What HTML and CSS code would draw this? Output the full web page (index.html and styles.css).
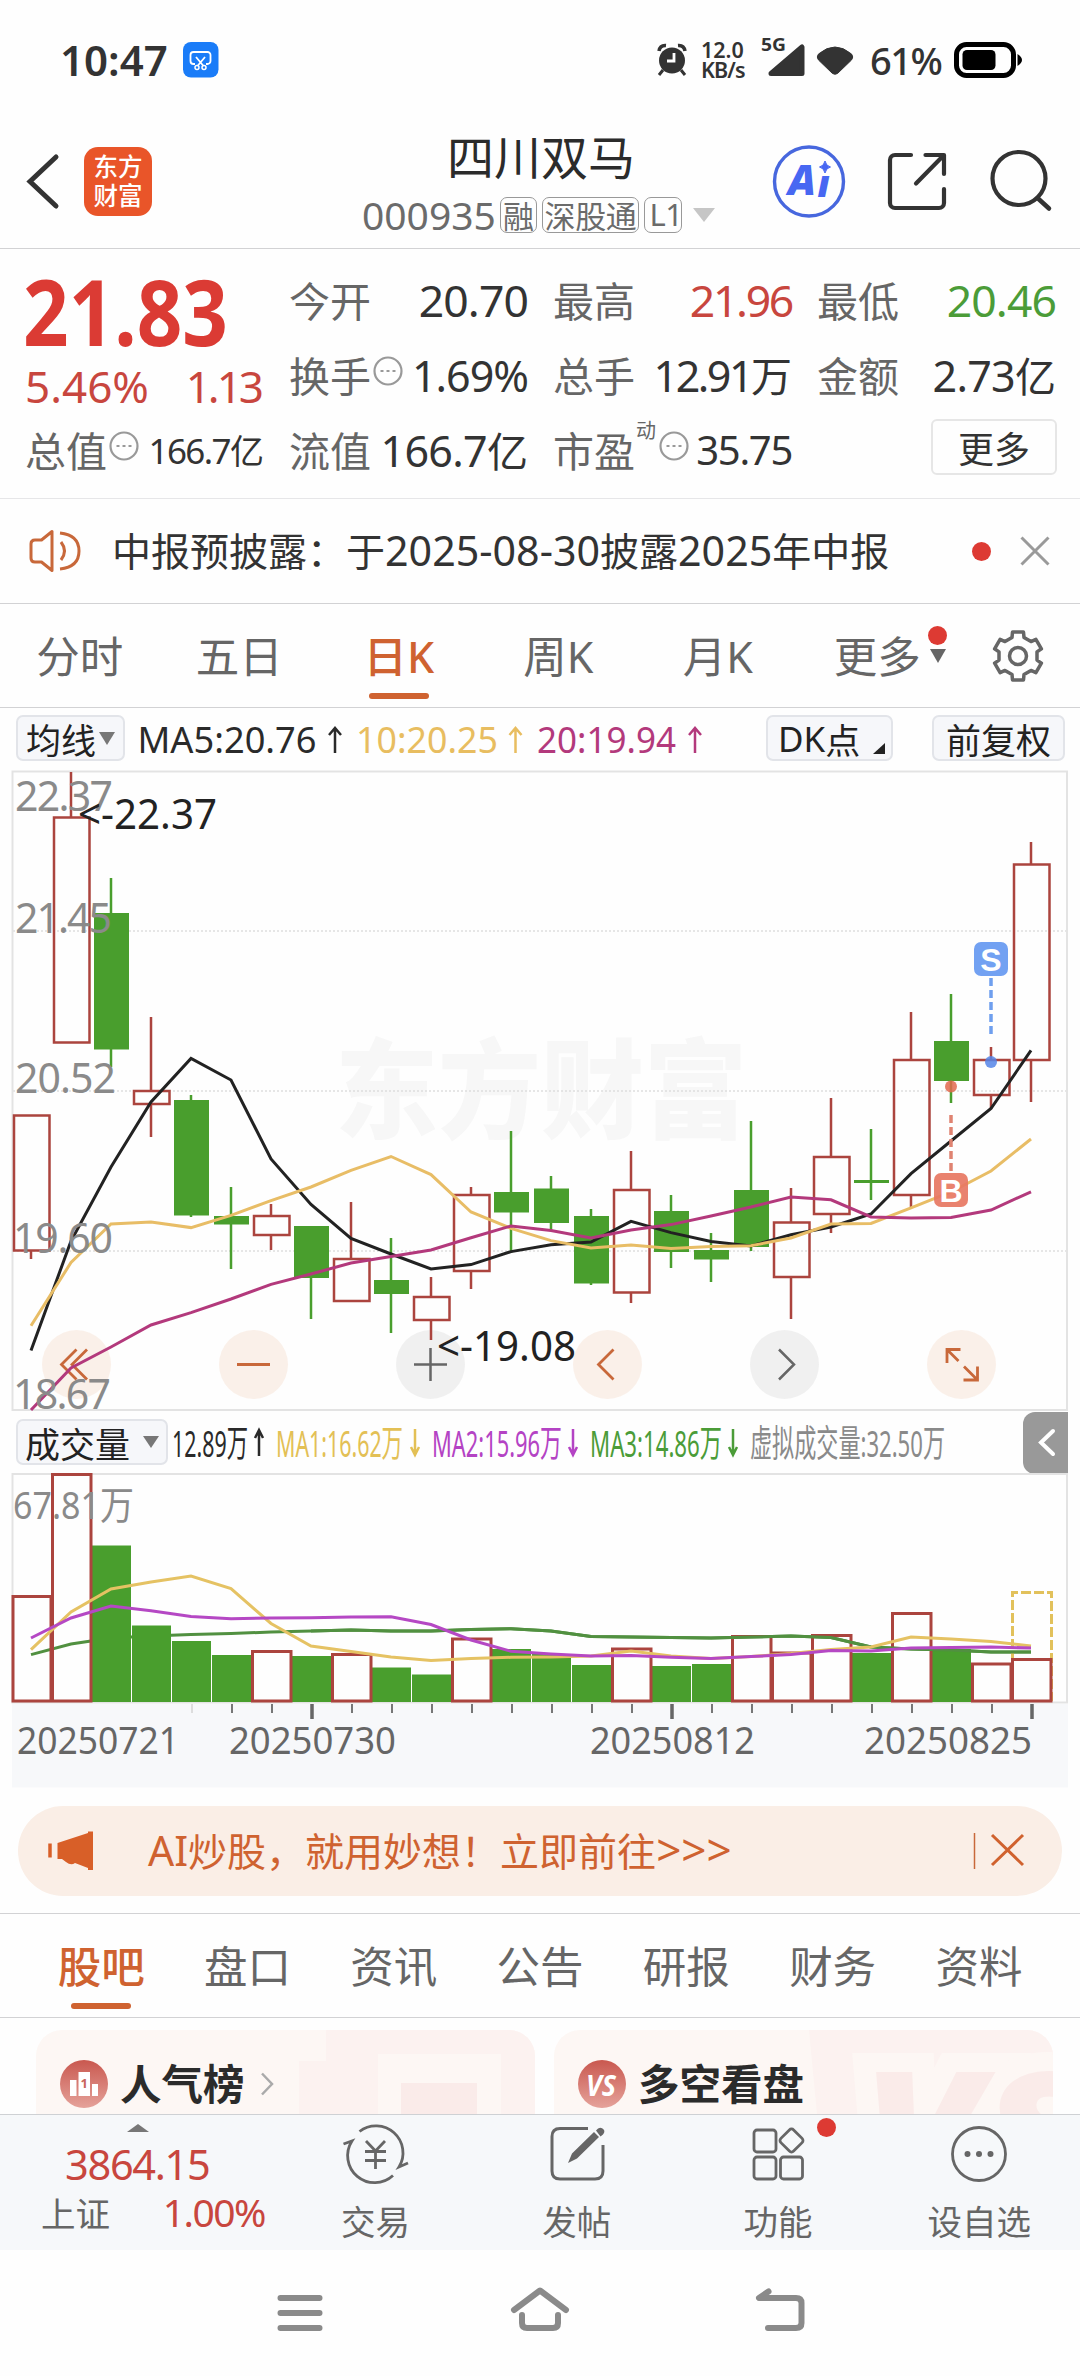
FILE: index.html
```html
<!DOCTYPE html>
<html lang="zh-CN">
<head>
<meta charset="utf-8">
<title>四川双马 000935</title>
<link rel="stylesheet" href="styles.css">
</head>
<body>
<div class="statusbar">
  <span class="clock">10:47</span>
  <svg class="cut" viewBox="183 42 36 36"><rect x="183" y="42" width="35.500" height="35.500" rx="8" fill="#1a7cf8"/><path d="M195 64h-1.500a3 3 0 0 1-3-3v-6a3 3 0 0 1 3-3h14a3 3 0 0 1 3 3v6a3 3 0 0 1-3 3H206M196 57l7.500 9M205 57l-7.500 9" fill="none" stroke="#fff" stroke-width="1.800"/><circle cx="197" cy="67.500" r="2" fill="none" stroke="#fff" stroke-width="1.500"/><circle cx="204" cy="67.500" r="2" fill="none" stroke="#fff" stroke-width="1.500"/></svg>
  <svg class="alarm" viewBox="657 44 30 32"><circle cx="672" cy="60.500" r="13" fill="#333"/><path d="M659 51q1-6 7-5.500M685 51q-1-6-7-5.500" stroke="#333" stroke-width="3.500" fill="none"/><path d="M663 70l-4 5M681 70l4 5" stroke="#333" stroke-width="3"/><path d="M674 53v8h-7" fill="none" stroke="#fff" stroke-width="2.800"/></svg>
  <div class="speed"><span>12.0</span><span>KB/s</span></div>
  <svg class="signal" viewBox="758 32 50 46"><text x="761" y="50.500" class="g5" textLength="25" lengthAdjust="spacingAndGlyphs">5G</text><path d="M771 73.500L802 47v26.500z" fill="#333" stroke="#333" stroke-width="5" stroke-linejoin="round"/></svg>
  <svg class="wifi" viewBox="814 44 42 32"><path d="M818.500 54Q835 40 851.500 54Q854 57 851.500 60L837.500 73.500Q835 75 832.500 73.500L818.500 60Q816 57 818.500 54Z" fill="#333" stroke="#333"/></svg>
  <span class="pct">61%</span>
  <svg class="battery" viewBox="952 41 70 38"><rect x="956.500" y="44.500" width="57" height="31" rx="10" fill="none" stroke="#000" stroke-width="5"/><rect x="962.500" y="50" width="33" height="20" rx="4.500"/><path d="M1017.500 54q4.500 3 4.500 6t-4.500 6z"/></svg>
</div>

<header class="header">
  <svg class="back" viewBox="24 150 36 62"><path d="M56 157L30 181.500L56 206" fill="none" stroke="#333" stroke-width="5" stroke-linecap="round"/></svg>
  <div class="logo"><span>东方</span><span>财富</span></div>
  <div class="title">
    <h1>四川双马</h1>
    <div class="code"><span class="n">000935</span><i>融</i><i>深股通</i><i class="n">L1</i><svg viewBox="0 0 24 16"><path d="M1 1h22L12 15z" fill="#c6c6c6"/></svg></div>
  </div>
  <svg class="ai" viewBox="770 143 78 78"><circle cx="809" cy="181.500" r="34.500" fill="none" stroke="#4767de" stroke-width="3.400"/><text x="788" y="194.500" class="aitext" font-size="42" textLength="28" lengthAdjust="spacingAndGlyphs">A</text><text x="817.500" y="196.500" class="aitext" font-size="37">ı</text><path d="M825 161q1 5 5.500 6q-4.500 1-5.500 6q-1-5-5.500-6q4.500-1 5.500-6z" fill="#4767f2" stroke="#4767f2"/></svg>
  <svg class="share" viewBox="884 148 68 68"><path d="M911 155h-16a5 5 0 0 0-5 5v43a5 5 0 0 0 5 5h44a5 5 0 0 0 5-5v-14M925.500 155H944v19M943 156L916 183.500" fill="none" stroke="#333" stroke-width="4.200" stroke-linecap="round" stroke-linejoin="round"/></svg>
  <svg class="search" viewBox="988 148 68 68"><circle cx="1019" cy="178.500" r="26.500" fill="none" stroke="#333" stroke-width="4.200"/><path d="M1037.500 198L1049 208.500" stroke="#333" stroke-width="4.500" stroke-linecap="round"/></svg>
</header>

<section class="quote">
  <div class="main">
    <svg class="price" viewBox="25 262 239 98"><text x="23" y="346" textLength="205" lengthAdjust="spacingAndGlyphs">21.83</text></svg>
    <div class="chg"><span>5.46%</span><span class="k">1.13</span></div>
    <div class="cell sm"><label>总值</label><svg class="dots" viewBox="0 0 30 30"><circle cx="15" cy="15" r="13.500"/><path d="M7.500 15h3M13.500 15h3M19.500 15h3"/></svg><b><span>166.7</span>亿</b></div>
  </div>
  <div class="grid">
    <div class="cell"><label>今开</label><b class="t">20.70</b></div>
    <div class="cell"><label>最高</label><b class="t red k2">21.96</b></div>
    <div class="cell"><label>最低</label><b class="t green">20.46</b></div>
    <div class="cell"><label>换手</label><svg class="dots" viewBox="0 0 30 30"><circle cx="15" cy="15" r="13.500"/><path d="M7.500 15h3M13.500 15h3M19.500 15h3"/></svg><b><span class="k1">1.69%</span></b></div>
    <div class="cell"><label>总手</label><b><span class="k3">12.91</span>万</b></div>
    <div class="cell"><label>金额</label><b><span class="k4">2.73</span>亿</b></div>
    <div class="cell"><label>流值</label><b><span class="k4">166.7</span>亿</b></div>
    <div class="cell"><label>市盈<sup>动</sup></label><svg class="dots" viewBox="0 0 30 30"><circle cx="15" cy="15" r="13.500"/><path d="M7.500 15h3M13.500 15h3M19.500 15h3"/></svg><b class="pe">35.75</b></div>
    <div class="cell end"><button>更多</button></div>
  </div>
</section>

<section class="notice">
  <svg class="horn" viewBox="26 525 58 52"><path d="M52 531.500v39L41.500 562H35q-4 0-4-4v-14q0-4 4-4h6.500z" fill="none" stroke="#c8683a" stroke-width="3" stroke-linejoin="round"/><path d="M61 542q7 9 0 18M60 533q19 2 19 18t-19 18" fill="none" stroke="#c8683a" stroke-width="3"/></svg>
  <p>中报预披露：于<span class="n">2025-08-30</span>披露<span class="n">2025</span>年中报</p>
  <i class="dot"></i>
  <svg class="close" viewBox="1018 534 34 32"><path d="M1021.500 536.500l27 27M1048.500 536.500l-27 27" stroke="#9a9a9a" stroke-width="3"/></svg>
</section>

<nav class="periods">
  <a>分时</a><a>五日</a><a class="on">日<span>K</span></a><a>周<span>K</span></a><a>月<span>K</span></a><a class="more">更多<svg viewBox="0 0 16 14"><path d="M0 0h16L8 14z" fill="#666"/></svg><i class="dot"></i></a>
  <svg class="gear" viewBox="-29 -29 58 58"><path d="M-6-18.500L-5.500-23.900H5.500L6-18.500L13-14.400L17.900-16.700L23.400-7.200L19-4.100V4.100L23.400 7.200L17.900 16.700L13 14.400L6 18.500L5.500 23.900H-5.500L-6 18.500L-13 14.400L-17.900 16.700L-23.400 7.200L-19 4.100V-4.100L-23.400-7.200L-17.900-16.700L-13-14.400Z" fill="none" stroke="#666" stroke-width="3.500" stroke-linejoin="round"/><circle r="8.500" fill="none" stroke="#666" stroke-width="3.500"/></svg>
</nav>

<div class="malist">
  <button class="pill p1">均线<svg viewBox="0 0 16 13"><path d="M0 0h16L8 13z" fill="#777"/></svg></button>
  <svg class="mavals" viewBox="130 708 590 62">
    <g class="ma"><text x="137.500" y="753" textLength="179" lengthAdjust="spacingAndGlyphs" fill="#2a2a2a">MA5:20.76</text><text x="356" y="753" textLength="142" lengthAdjust="spacingAndGlyphs" fill="#e8bd60">10:20.25</text><text x="537" y="753" textLength="139" lengthAdjust="spacingAndGlyphs" fill="#b3397c">20:19.94</text></g>
    <path d="M335 753v-25M329 735l6-7l6 7" class="ar" stroke="#2a2a2a"/><path d="M515.500 753v-25M509.500 735l6-7l6 7" class="ar" stroke="#e8bd60"/><path d="M695 753v-25M689 735l6-7l6 7" class="ar" stroke="#b3397c"/>
  </svg>
  <button class="pill p2"><span class="n">DK</span>点<svg viewBox="0 0 12 11"><path d="M12 0v11H0z" fill="#222"/></svg></button>
  <button class="pill p3">前复权</button>
</div>

<svg class="kline" viewBox="12 771 1056 640">
  <text class="wm" x="335" y="1130" textLength="412" lengthAdjust="spacingAndGlyphs">东方财富</text>
  <path d="M13 931H1066M13 1091H1066M13 1251H1066" stroke="#dedede" stroke-width="1.500" stroke-dasharray="2 2"/>
  <path d="M12.500 771.500H1067V1410H12.500Z" fill="none" stroke="#e3e3e3" stroke-width="2"/>
  <g class="btns">
    <g fill="#f6dfd0" fill-opacity=".45"><circle cx="76.500" cy="1364.500" r="34.500"/><circle cx="253.500" cy="1364.500" r="34.500"/><circle cx="607.500" cy="1364.500" r="34.500"/><circle cx="961.500" cy="1364.500" r="34.500"/></g>
    <g fill="#ddd" fill-opacity=".4"><circle cx="430.500" cy="1364.500" r="34.500"/><circle cx="784.500" cy="1364.500" r="34.500"/></g>
    <g fill="none" stroke="#c8683a" stroke-width="2.800"><path d="M76.500 1349.500l-15 15l15 15M87 1349.500l-15 15l15 15M237 1364.500h33M613.500 1349.500l-15 15l15 15"/><path d="M947 1363v-13.500h13.500M947.500 1350l11 11M963.500 1380h14V1366.500M977 1379.500l-13-13"/></g>
    <path d="M414 1364.500h33M430.500 1348v33M779 1349.500l15 15l-15 15" fill="none" stroke="#666" stroke-width="2.500"/>
  </g>
  <g class="up">
    <path d="M31 1251V1259M71 772V818M151 1017V1091M151 1104V1137M271 1204V1216M271 1235V1250M351 1202V1259M431 1277V1297M431 1320V1340M471 1187V1195M471 1271V1289M631 1151V1190M631 1292V1303M791 1188V1222M791 1277V1319M831 1098V1157M831 1214V1233M911 1012V1060M911 1195V1207M991 1047V1060M991 1095V1109M1031 842V864M1031 1060V1102"/>
    <path d="M14 1115.500h35.500V1250.500H14ZM54 817.500h35.500V1042.500H54ZM134 1091h35.500V1104H134ZM254 1216h35.500V1235H254ZM334 1259h35.500V1301H334ZM414 1297h35.500V1320H414ZM454 1195h35.500V1271H454ZM614 1190h35.500V1292.500H614ZM774 1222.500h35.500V1277H774ZM814 1157h35.500V1214H814ZM894 1060h35.500V1195H894ZM974 1060h35.500V1095H974ZM1014 864.500h35.500V1060H1014Z"/>
  </g>
  <g class="down">
    <path d="M111 878V1067M191 1095V1217M231 1187V1269M311 1226V1319M391 1238V1333M511 1131V1253M551 1176V1231M591 1209V1285M671 1195V1268M711 1233V1282M751 1121V1251M871 1129V1200M951 994V1103"/>
    <path class="fill" d="M94 913h35V1049.500H94ZM174 1100h35V1215.500H174ZM214 1216h35V1224.500H214ZM294 1226h35V1278H294ZM374 1280h35V1294H374ZM494 1192h35V1212.500H494ZM534 1188.500h35V1223H534ZM574 1216h35V1283.500H574ZM654 1211h35V1252H654ZM694 1250h35V1259.500H694ZM734 1190h35V1247H734ZM854 1180h35V1183H854ZM934 1041h35V1081H934Z"/>
  </g>
  <polyline class="ln" stroke="#222" points="31,1350.500 71,1241 111,1167 151,1102 191,1058.400 231,1080 271,1159 311,1204.400 351,1238.500 391,1254 431,1269 471,1264.600 511,1251.600 551,1244.800 591,1242 631,1221.300 671,1232.600 711,1241.500 751,1246 791,1234.700 831,1227 871,1214 911,1173.700 951,1141 991,1108.500 1031,1050.400"/>
  <polyline class="ln" stroke="#e8bd66" points="31,1325.700 71,1262.500 111,1224 151,1222 191,1227.600 231,1215.400 271,1200.700 311,1187 351,1170.400 391,1156.500 431,1174.600 471,1212 511,1228.400 551,1240.600 591,1248 631,1245 671,1248.600 711,1246.500 751,1245.700 791,1238 831,1224 871,1223.400 911,1207.800 951,1192 991,1171 1031,1139"/>
  <polyline class="ln" stroke="#b3397c" points="31,1410 71,1368 111,1347 151,1325 191,1312.600 231,1299 271,1284.400 311,1274 351,1263 391,1256.600 431,1250 471,1237.700 511,1226 551,1230.500 591,1238 631,1230 671,1224.600 711,1216 751,1207 791,1197 831,1199.800 871,1217 911,1218 951,1217.500 991,1210 1031,1191.800"/>
  <g class="axis">
    <text x="15" y="810.500" textLength="98">22.37</text><text x="15" y="933" textLength="97">21.45</text><text x="15" y="1092.500" textLength="101">20.52</text><text x="13" y="1252.500" textLength="100">19.60</text><text x="13" y="1409" textLength="98">18.67</text>
  </g>
  <g class="mark"><text x="78" y="829" textLength="139" lengthAdjust="spacingAndGlyphs">&lt;-22.37</text><text x="437" y="1361" textLength="139" lengthAdjust="spacingAndGlyphs">&lt;-19.08</text></g>
  <path d="M991 978V1036" stroke="#6f9fee" stroke-width="3.500" stroke-dasharray="8 4"/><circle cx="991" cy="1062" r="6" fill="#5585e8" fill-opacity=".85"/><rect x="974" y="942" width="34" height="34" rx="7" fill="#72a1f2"/>
  <path d="M951 1115V1172" stroke="#df8371" stroke-width="3.500" stroke-dasharray="8 4"/><circle cx="951" cy="1086.500" r="6" fill="#e2694f" fill-opacity=".85"/><rect x="934" y="1173" width="34" height="34" rx="7" fill="#e77762" fill-opacity=".92"/>
  <g class="bs"><text x="991" y="970.500">S</text><text x="951" y="1201.500">B</text></g>
</svg>

<div class="volinfo">
  <button class="pill p4">成交量<svg viewBox="0 0 16 12"><path d="M0 0h16L8 12z" fill="#777"/></svg></button>
  <svg class="volvals" viewBox="170 1412 780 62">
    <g class="vt"><text x="172" y="1458" textLength="76" lengthAdjust="spacingAndGlyphs" fill="#2a2a2a">12.89万</text><text x="276" y="1458" textLength="127" lengthAdjust="spacingAndGlyphs" fill="#e3c055">MA1:16.62万</text><text x="432" y="1458" textLength="130" lengthAdjust="spacingAndGlyphs" fill="#b443c4">MA2:15.96万</text><text x="590" y="1458" textLength="132" lengthAdjust="spacingAndGlyphs" fill="#4b9c38">MA3:14.86万</text><text x="750" y="1458" textLength="195" lengthAdjust="spacingAndGlyphs" fill="#8a8a8a">虚拟成交量:32.50万</text></g>
    <path d="M259 1457v-26M255 1439l4-8l4 8" class="ar" stroke="#2a2a2a"/><path d="M415 1430v26M411 1448l4 8l4-8" class="ar" stroke="#e3c055"/><path d="M573 1430v26M569 1448l4 8l4-8" class="ar" stroke="#b443c4"/><path d="M733 1430v26M729 1448l4 8l4-8" class="ar" stroke="#4b9c38"/>
  </svg>
  <div class="fold"><svg viewBox="0 0 20 30"><path d="M16 3L4 14.500L16 26" fill="none" stroke="#fff" stroke-width="4" stroke-linecap="round"/></svg></div>
</div>

<svg class="vol" viewBox="12 1474 1056 315">
  <rect x="12" y="1705" width="1056" height="83.500" fill="#f7f8fa"/>
  <path d="M12.500 1475H1067V1703.500H12.500Z" fill="none" stroke="#e3e3e3" stroke-width="2"/>
  <polyline class="ln" stroke="#519040" points="31,1655.600 71,1645 111,1639 151,1637 191,1635.500 231,1634.500 271,1633 311,1632 351,1631 391,1632 431,1632 471,1630.500 511,1629.800 551,1632 591,1637.500 631,1638 671,1638.500 711,1639 751,1638 791,1637 831,1638.500 871,1648 911,1650 951,1651 991,1653 1031,1653"/>
  <path fill="#499e2d" d="M92 1546.500h39V1703H92ZM132 1626.500h39V1703H132ZM172 1642h39V1703H172ZM212 1656h39V1703H212ZM292 1657h39V1703H292ZM372 1668.500h39V1703H372ZM412 1675.500h39V1703H412ZM492 1650h39V1703H492ZM532 1655h39V1703H532ZM572 1666h39V1703H572ZM652 1667h39V1703H652ZM692 1665h39V1703H692ZM852 1654h39V1703H852ZM932 1650h39V1703H932Z"/>
  <path d="M1012.500 1702V1593.500H1051.500V1702" fill="none" stroke="#e2c15b" stroke-width="3" stroke-dasharray="10 3"/>
  <path class="vup" d="M13 1597.500H51V1702H13ZM52.500 1475.500H91V1702H52.500ZM252.500 1652.500H291V1702H252.500ZM332.500 1655.500H371V1702H332.500ZM452.500 1640H491V1702H452.500ZM612.500 1650H651V1702H612.500ZM732.500 1637.500H771V1702H732.500ZM772.500 1654H811V1702H772.500ZM812.500 1636.500H851V1702H812.500ZM892.500 1614.500H931V1702H892.500ZM972.500 1665H1011V1702H972.500ZM1012.500 1660.500H1051V1702H1012.500Z"/>
  <polyline class="ln" stroke="#519040" points="311,1632 351,1631 391,1632 431,1632 471,1630.500 511,1629.800 551,1632 591,1637.500 631,1638 671,1638.500 711,1639 751,1638 791,1637 831,1638.500 871,1648 911,1650 951,1651 991,1653 1031,1653"/>
  <polyline class="ln" stroke="#e5c263" points="31,1650.600 71,1613 111,1590 151,1583 191,1577 231,1589.600 271,1624.500 311,1647 351,1652.600 391,1658 431,1661.600 471,1659.600 511,1658.300 551,1658 591,1657 631,1652 671,1657 711,1659.600 751,1657.600 791,1654.600 831,1650.600 871,1648 911,1638 951,1640 991,1642.500 1031,1647"/>
  <polyline class="ln" stroke="#b548c4" points="31,1639 71,1619 111,1607 151,1611.700 191,1617.400 231,1619.800 271,1619 311,1618.800 351,1618 391,1617.800 431,1625.500 471,1641 511,1652.300 551,1655 591,1657 631,1656.600 671,1658.300 711,1659.600 751,1657.600 791,1655.600 831,1651.600 871,1652 911,1649 951,1648.600 991,1648 1031,1649"/>
  <path d="M192 1705V1714" stroke="#ddd" stroke-width="2"/>
  <path d="M232 1705v9M272 1705v9M352 1705v9M392 1705v9M432 1705v9M472 1705v9M512 1705v9M552 1705v9M592 1705v9M632 1705v9M712 1705v9M752 1705v9M792 1705v9M832 1705v9M872 1705v9M912 1705v9M952 1705v9M992 1705v9" stroke="#777" stroke-width="2"/>
  <path d="M312 1705v15M672 1705v15M1032 1705v15" stroke="#666" stroke-width="3.500"/>
  <g class="dates"><text x="17" y="1755" textLength="162" lengthAdjust="spacingAndGlyphs">20250721</text><text x="229" y="1755" textLength="167" lengthAdjust="spacingAndGlyphs">20250730</text><text x="590" y="1755" textLength="165" lengthAdjust="spacingAndGlyphs">20250812</text><text x="864" y="1755" textLength="168" lengthAdjust="spacingAndGlyphs">20250825</text></g>
  <text class="vlab" x="13" y="1520" textLength="121" lengthAdjust="spacingAndGlyphs">67.81万</text>
</svg>

<section class="promo">
  <div class="banner">
    <svg class="mega" viewBox="46 1828 50 46"><path d="M57.500 1843L88 1833V1831.500H93V1870H88V1868L75 1863Q71 1866 66 1862L62 1859H57.500Z" fill="#d85f28"/><path d="M50 1843.500v14" stroke="#d85f28" stroke-width="3.500"/></svg>
    <p><span class="n">AI</span>炒股，就用妙想！立即前往<span class="gt">&gt;&gt;&gt;</span></p>
    <svg class="bx" viewBox="970 1828 60 46"><path d="M974.500 1833v36" stroke="#c8683a" stroke-width="1.500"/><path d="M992 1835l31 30M1023 1835l-31 30" stroke="#d0622f" stroke-width="3"/></svg>
  </div>
</section>

<nav class="tabs"><a class="on">股吧</a><a>盘口</a><a>资讯</a><a>公告</a><a>研报</a><a>财务</a><a>资料</a></nav>

<section class="cards">
  <div class="card">
    <svg class="bg" viewBox="36 2030 499 84"><path d="M326 2030H535V2114H501V2054H378V2114H299V2061H326Z" fill="#fcf2f0"/><path d="M401 2083H477V2114H401Z" fill="#faebe9"/></svg>
    <svg class="ic" viewBox="0 0 48 48"><defs><linearGradient id="g" x1="0" y1="0" x2="0" y2="1"><stop offset="0" stop-color="#c9584f"/><stop offset="1" stop-color="#e5a29a"/></linearGradient></defs><circle cx="24" cy="24" r="24" fill="url(#g)"/><path d="M10 20h6.500v16H10ZM18.500 12H30v24H18.500ZM32 24h6v12H32Z" fill="#fff"/><text x="24.200" y="28" font-size="13" text-anchor="middle" fill="#c9665c" class="vs1">1</text></svg>
    <h2>人气榜</h2>
    <svg class="chev" viewBox="0 0 14 24"><path d="M2 1.500L12 12L2 22.500" fill="none" stroke="#aaa" stroke-width="2.500"/></svg>
  </div>
  <div class="card">
    <svg class="bg" viewBox="554 2030 499 84"><path d="M809 2030H1053V2114H817Z" fill="#fcf2f0"/><text x="862" y="2190" class="bigvs" textLength="225" lengthAdjust="spacingAndGlyphs">VS</text></svg>
    <svg class="ic" viewBox="0 0 48 48"><circle cx="24" cy="24" r="24" fill="url(#g)"/><text x="8" y="36" class="vs" textLength="30" lengthAdjust="spacingAndGlyphs">VS</text></svg>
    <h2>多空看盘</h2>
  </div>
</section>

<footer class="bottom">
  <div class="index">
    <svg viewBox="0 0 22 8"><path d="M0 8L11 0L22 8z" fill="#777"/></svg>
    <strong>3864.15</strong>
    <div><span>上证</span><em>1.00%</em></div>
  </div>
  <a><svg viewBox="342 2121 68 64"><g fill="none" stroke="#666" stroke-width="2.800"><path d="M359.500 2131.500A27 27 0 0 1 399 2167L408 2163"/><path d="M393 2175.500A27 27 0 0 1 352 2141L343.500 2144"/><path d="M366 2141l9.500 10l9.500-10M375.500 2151v18M365 2151.500h21M365 2160.500h21"/></g></svg>交易</a>
  <a><svg viewBox="543 2121 68 64"><path d="M588 2128.500H560q-8 0-8 8V2171q0 8 8 8h35q8 0 8-8v-26" fill="none" stroke="#666" stroke-width="3"/><path d="M568 2163l4-9.500L594 2132l5 5L577 2158.500ZM596 2130.500q3-4 6.500-2t.500 6l-2.500 2z" fill="#666"/></svg>发帖</a>
  <a><svg viewBox="744 2121 68 64"><g fill="none" stroke="#666" stroke-width="2.800"><rect x="754" y="2130" width="22" height="22" rx="3"/><rect x="754" y="2157" width="22" height="22" rx="3"/><rect x="780.500" y="2157" width="22" height="22" rx="3"/><rect x="782.500" y="2131.500" width="18" height="18" rx="3" transform="rotate(45 791.500 2140.500)"/></g></svg>功能<i class="dot"></i></a>
  <a><svg viewBox="945 2121 68 64"><circle cx="979" cy="2154" r="26.500" fill="none" stroke="#666" stroke-width="2.800"/><g fill="#666"><circle cx="967.500" cy="2154" r="3"/><circle cx="979" cy="2154" r="3"/><circle cx="990.500" cy="2154" r="3"/></g></svg>设自选</a>
</footer>

<nav class="sys">
  <svg viewBox="270 2280 60 60"><path d="M280.500 2298h39M280.500 2313h39M280.500 2328h39"/></svg>
  <svg viewBox="510 2280 60 60"><path d="M514 2310L540 2290.500L566 2310M522 2315v8q0 5 5 5h26q5 0 5-5v-8"/></svg>
  <svg viewBox="750 2280 60 60"><path d="M768.500 2291.500L759 2298h37q5.500 0 5.500 5v20q0 5-5.500 5h-28"/></svg>
</nav>
</body>
</html>
```
FILE: styles.css
```css
* { box-sizing: border-box; margin: 0; padding: 0; }
body {
  width: 1080px; height: 2376px; overflow: hidden; background: #fefefe; color: #333;
  font-family: "Noto Sans CJK SC", "Noto Sans", sans-serif;
}
svg { display: block; flex: none; overflow: visible; }
i, em { font-style: normal; }
button { font: inherit; color: inherit; background: none; border: 0; }
.n { font-family: "Noto Sans", sans-serif; }
.dot { background: #dd3a33; border-radius: 50%; display: block; }

/* status bar */
.statusbar { height: 120px; display: flex; align-items: center; font-family: "Noto Sans", sans-serif; font-weight: 600; padding-left: 60px; }
.clock { font-size: 42px; line-height: 50px; width: 123px; }
.cut { width: 36px; height: 36px; }
.alarm { width: 30px; height: 32px; margin-left: 438px; }
.speed { width: 60px; margin-left: 14px; font-size: 21.500px; line-height: 20px; display: flex; flex-direction: column; }
.speed span:last-child { letter-spacing: -.9px; }
.signal { width: 50px; height: 46px; margin: -10px 0 0 -3px; }
.g5 { font-size: 18px; font-weight: 700; fill: #333; }
.wifi { width: 42px; height: 32px; margin-left: 6px; }
.pct { font-size: 38px; line-height: 50px; width: 82px; margin-left: 14px; font-weight: 500; letter-spacing: -1.5px; white-space: nowrap; }
.battery { width: 70px; height: 38px; }

/* header */
.header { height: 129px; border-bottom: 1px solid #d2d2d4; display: flex; padding-left: 24px; }
.back { width: 36px; height: 62px; margin-top: 30px; }
.logo { width: 68px; height: 69px; margin: 27px 0 0 24px; border-radius: 14px; background: #e95529; color: #fff; font-weight: 500; font-size: 24.5px; line-height: 29px; display: flex; flex-direction: column; align-items: center; padding-top: 4px; }
.title { width: 356px; margin-left: 210px; }
.title h1 { font-size: 47px; font-weight: 400; line-height: 60px; margin: 5px 0 0 85px; color: #2b2b2b; white-space: nowrap; }
.code { display: flex; align-items: center; margin-top: 11px; height: 38px; color: #6b6b6b; font-size: 39px; }
.code > span { width: 138px; line-height: 38px; }
.code i { font-size: 31px; line-height: 33px; border: 1.500px solid #999; border-radius: 7px; height: 36px; padding: 0 2px; margin-right: 5px; letter-spacing: -.4px; }
.code i.n { padding: 0 4px; width: 38px; }
.code svg { width: 24px; height: 16px; margin-left: 5px; }
.ai { width: 78px; height: 78px; margin: 23px 0 0 52px; }
.aitext { font-family: "Noto Sans", sans-serif; font-weight: 900; font-style: italic; fill: #4767f2; }
.share { width: 68px; height: 68px; margin: 28px 0 0 36px; }
.search { width: 68px; height: 68px; margin: 28px 0 0 36px; }

/* quote */
.quote { height: 250px; border-bottom: 1px solid #e6e6e8; display: flex; padding: 13px 24px 0 25px; gap: 25px; }
.main { width: 239px; }
.price { width: 239px; height: 98px; font: 700 91px "Noto Sans"; fill: #db3b34; }
.chg { height: 52px; line-height: 52px; display: flex; justify-content: space-between; font-family: "Noto Sans"; font-size: 44px; color: #c8463e; }
.chg .k { letter-spacing: -3px; margin-right: 3px; }
.grid { display: grid; grid-template-columns: repeat(3, 239px); grid-auto-rows: 75px; column-gap: 25px; }
.cell { display: flex; align-items: center; font-size: 41px; line-height: 75px; white-space: nowrap; height: 75px; }
.cell label { color: #666; position: relative; }
.cell b { font-weight: 400; margin-left: auto; }
.cell b span, .cell .t, .cell .pe { font-family: "Noto Sans"; font-size: 43px; }
.cell .t { font-size: 44.5px; letter-spacing: -.9px; }
.cell .pe { font-size: 40px; letter-spacing: -1.300px; }
.cell .k1 { letter-spacing: -1px; }
.cell .k2 { letter-spacing: -2.300px; }
.cell .k3 { letter-spacing: -2.500px; }
.cell .k4 { letter-spacing: -.700px; }
.cell b.red { color: #c8463e; } .cell b.green { color: #4b9c38; }
.cell.sm b { font-size: 34px; }
.cell.sm b span { font-size: 35px; letter-spacing: -1.600px; }
.dots { width: 30px; height: 30px; margin: -8px 0 0 2px; fill: none; stroke: #999; stroke-width: 2.200; }
.cell sup { position: absolute; left: 83px; top: -20px; font-size: 20px; }
.cell label:has(sup) + .dots { margin-left: 24px; }
.end { justify-content: flex-end; }
.end button { width: 126px; height: 56px; border: 2px solid #e6e6e6; border-radius: 6px; font-size: 36px; line-height: 50px; margin: -5px -1px 0 0; }

/* notice */
.notice { height: 105px; border-bottom: 1px solid #d2d2d4; display: flex; align-items: center; padding-left: 26px; }
.horn { width: 58px; height: 52px; }
.notice p { font-size: 39px; line-height: 60px; width: 860px; margin-left: 28px; margin-top: -3px; white-space: nowrap; }
.notice p .n { font-size: 41.200px; }
.notice .dot { width: 19px; height: 19px; }
.close { width: 34px; height: 32px; margin-left: 27px; }

/* periods */
.periods { height: 104px; border-bottom: 1px solid #d2d2d4; display: grid; grid-template-columns: repeat(6, 159.500px) 1fr; align-items: center; font-size: 43.500px; line-height: 102px; color: #666; }
.periods a { text-align: center; position: relative; height: 103px; white-space: nowrap; }
.periods a span { font-family: "Noto Sans"; font-size: 43px; }
.on { color: #cf6230; font-weight: 500; }
.on::after { content: ""; position: absolute; left: 50%; bottom: 8px; width: 60px; height: 6.500px; margin-left: -30px; border-radius: 4px; background: #cf6230; }
.more svg { position: absolute; left: 132px; top: 45px; width: 16px; height: 14px; }
.more .dot { position: absolute; left: 130px; top: 22px; width: 19px; height: 19px; }
.periods .gear { width: 58px; height: 58px; margin-left: 32px; }

/* indicators */
.malist { height: 63px; display: flex; align-items: flex-start; padding: 7px 0 0 16px; }
.pill { height: 46px; border: 2px solid #e2e4e9; border-radius: 7px; background: #f6f7fa; font-size: 35px; line-height: 41px; display: flex; align-items: center; color: #222; white-space: nowrap; }
.p1 { width: 109px; padding-left: 8px; } .p1 svg { width: 16px; height: 13px; margin-left: 3px; }
.mavals { width: 590px; height: 62px; margin: -7px 0 0 5px; }
.ma { font: 37px "Noto Sans"; }
.ar { fill: none; stroke-width: 2.500; }
.p2 { width: 127px; padding-left: 10px; margin-left: 46px; } .p2 svg { width: 12px; height: 11px; margin: 20px 0 0 13px; }
.p3 { width: 133px; padding-left: 12px; margin-left: 39px; }

/* candles */
.kline { width: 1056px; height: 640px; margin-left: 12px; }
.wm { font-size: 108px; font-weight: 900; fill: #f7f7f7; }
.up { fill: none; stroke: #ab443e; stroke-width: 2.500; }
.down { fill: none; stroke: #499e2d; stroke-width: 2.500; }
.down .fill { fill: #499e2d; stroke: none; }
.ln { fill: none; stroke-width: 3; }
.axis { font: 41px "Noto Sans"; fill: #8a8a8a; }
.mark { font: 41px "Noto Sans"; fill: #222; }
.bs { font: 700 32px "Liberation Sans"; fill: #fff; text-anchor: middle; }

/* volume */
.volinfo { height: 62px; display: flex; padding: 8px 12px 0 16px; }
.p4 { width: 152px; padding-left: 7px; } .p4 svg { width: 16px; height: 12px; margin-left: 13px; }
.volvals { width: 780px; height: 62px; margin: -8px 0 0 2px; }
.vt { font: 37px "Noto Sans", "Noto Sans CJK SC"; }
.fold { width: 45px; height: 62px; margin: -7px 0 0 auto; background: #999; border-radius: 12px 0 0 12px; padding: 16px 0 0 14px; }
.fold svg { width: 20px; height: 30px; }
.vol { width: 1056px; height: 315px; margin-left: 12px; }
.vup { fill: none; stroke: #ab443e; stroke-width: 3; }
.dates { font: 38.500px "Noto Sans"; fill: #666; }
.vlab { font: 39px "Noto Sans", "Noto Sans CJK SC"; fill: #8a8a8a; }

/* promo */
.promo { height: 126px; border-bottom: 1px solid #d2d2d4; padding: 18px 18px 0; }
.banner { height: 90px; border-radius: 45px; background: #faeee6; color: #cf6230; display: flex; align-items: center; padding-left: 28px; }
.mega { width: 50px; height: 46px; }
.banner p { width: 822px; margin-left: 52px; font-size: 39px; line-height: 80px; white-space: nowrap; margin-top: -3px; }
.banner .n { font-size: 41px; } .gt { font-family: "Noto Sans"; font-size: 44px; }
.bx { width: 60px; height: 46px; }

/* tabs */
.tabs { height: 104px; border-bottom: 1px solid #d2d2d4; display: grid; grid-template-columns: repeat(7, 146.300px); padding-left: 28px; font-size: 43.500px; line-height: 102px; color: #666; }
.tabs a { text-align: center; position: relative; }

/* cards */
.cards { height: 96px; display: flex; gap: 19px; padding: 12px 27px 0 36px; overflow: hidden; }
.card { position: relative; width: 499px; height: 84px; border-radius: 26px 26px 0 0; background: #fdf7f4; overflow: hidden; display: flex; align-items: center; padding: 24px 0 0 24px; flex: none; }
.bg { position: absolute; left: 0; top: 0; width: 499px; height: 84px; }
.ic { position: relative; width: 48px; height: 48px; }
.card h2 { position: relative; font-size: 41.500px; line-height: 50px; font-weight: 700; margin-left: 12px; margin-top: -4px; color: #2b2b2b; }
.chev { position: relative; width: 14px; height: 24px; margin-left: 15px; }
.vs { font: italic 700 28px "Open Sans"; fill: #fff; }
.vs1 { font-family: "Noto Sans"; font-weight: 700; }
.bigvs { font: italic 800 165px "Open Sans"; fill: #faebe9; stroke: #fdf7f4; stroke-width: 38; paint-order: stroke; }

/* bottom */
.bottom { height: 136px; background: #f6f8fa; border-top: 1px solid #cfd1d4; display: flex; color: #666; font-size: 34.500px; line-height: 44px; }
.index { width: 275px; position: relative; }
.index > svg { width: 22px; height: 8px; margin: 9px 0 0 127px; }
.index strong { display: block; font: 400 41.500px/50px "Noto Sans"; letter-spacing: -1.300px; color: #c8463e; margin: 7px 0 0 65px; }
.index div { display: flex; justify-content: space-between; padding: 0 10px 0 41px; margin-top: 1px; }
.index em { font-family: "Noto Sans"; font-size: 39px; letter-spacing: -1.500px; color: #c8463e; }
.bottom a { width: 201.200px; display: flex; flex-direction: column; align-items: center; padding-top: 6px; position: relative; }
.bottom a svg { width: 68px; height: 64px; margin-bottom: 13px; }
.bottom .dot { position: absolute; left: 140px; top: 3px; width: 19px; height: 19px; }

/* system navigation */
.sys { height: 126px; display: flex; justify-content: center; gap: 180px; padding-top: 30px; }
.sys svg { width: 60px; height: 60px; fill: none; stroke: #8a8a8a; stroke-width: 6; stroke-linecap: round; stroke-linejoin: round; }
```
